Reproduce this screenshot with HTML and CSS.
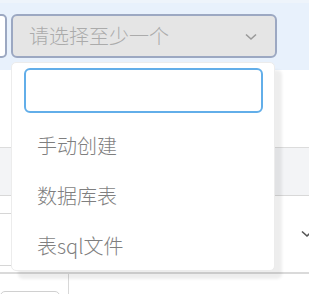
FILE: index.html
```html
<!DOCTYPE html>
<html lang="zh">
<head>
<meta charset="utf-8">
<link rel="stylesheet" href="styles.css">
</head>
<body>
<div class="page">
  <div class="band">
    <div class="filters">
      <div class="input-stub"></div>
      <div class="select">
        <span class="placeholder">请选择至少一个</span>
        <svg class="chev" width="12" height="8" viewBox="0 0 12 8"><path d="M1 1.5 L6 6 L11 1.5" fill="none" stroke="#9a9a9a" stroke-width="1.6"/></svg>
      </div>
    </div>
  </div>
  <div class="gap"></div>
  <div class="thead"></div>
  <div class="trow">
    <div class="cell-stub"></div>
    <svg class="row-chev" width="12" height="8" viewBox="0 0 12 8"><path d="M1 1.5 L6 6 L11 1.5" fill="none" stroke="#555" stroke-width="1.6"/></svg>
  </div>
  <div class="tfoot">
    <div class="foot-box"></div>
    <div class="foot-sep"></div>
  </div>

  <div class="dropdown">
    <div class="search"></div>
    <ul class="options">
      <li>手动创建</li>
      <li>数据库表</li>
      <li>表sql文件</li>
    </ul>
  </div>
</div>
</body>
</html>
```

FILE: styles.css
```css
* { box-sizing: border-box; }
html, body { margin: 0; padding: 0; background: #fff; }
body {
  font-family: "Noto Sans CJK SC", "Noto Sans", sans-serif;
  width: 309px;
  height: 294px;
  overflow: hidden;
}
.page { position: relative; width: 309px; height: 294px; overflow: hidden; }

.band {
  height: 70px;
  background: #e8f1fc;
  border-top: 3px solid #eef4fb;
  padding-top: 11px;
}
.filters { display: flex; gap: 4px; }
.input-stub {
  margin-left: -50px;
  width: 57px;
  height: 44px;
  background: #fff;
  border: 2px solid #9ca8c2;
  border-radius: 5px;
}
.select {
  width: 266px;
  height: 44px;
  background: #e5e5e5;
  border: 2px solid #9ca8c2;
  border-radius: 6px;
  display: flex;
  align-items: center;
  justify-content: space-between;
  padding: 0 18px 0 16px;
}
.placeholder { font-size: 20px; font-weight: 300; color: #ababab; line-height: 1; }
.chev { display: block; margin-top: 1px; }

.gap { height: 78px; border-bottom: 1px solid #dcdcdc; }
.thead { height: 48px; background: #f3f4f6; border-bottom: 1px solid #d8d8d8; }
.trow {
  height: 78px;
  border-bottom: 2px solid #dadada;
  position: relative;
  display: flex;
  align-items: center;
  justify-content: flex-end;
}
.cell-stub {
  position: absolute;
  left: -40px;
  top: 17px;
  width: 80px;
  height: 53px;
  border: 1px solid #d6d6d6;
  border-radius: 4px;
}
.row-chev { margin-right: -4px; }
.tfoot { display: flex; height: 20px; overflow: hidden; }
.foot-box {
  flex: none;
  width: 60px;
  height: 20px;
  margin-top: 17px;
  border: 1px solid #d0d0d0;
  border-radius: 5px;
}
.foot-sep { flex: none; width: 1px; height: 20px; background: #d8d8d8; margin-left: 8px; }

.dropdown {
  position: absolute;
  left: 11px;
  top: 62px;
  width: 264px;
  height: 209px;
  background: #fff;
  border: 1px solid #ececec;
  border-radius: 5px;
  box-shadow: 7px 8px 3px rgba(0, 0, 0, 0.07);
  padding: 5px 11px 0 12px;
}
.search {
  height: 45px;
  border: 2px solid #62aee9;
  border-radius: 6px;
  background: #fff;
}
.options { list-style: none; margin: 0; padding: 0; }
.options li {
  height: 50px;
  line-height: 50px;
  font-size: 20px;
  font-weight: 300;
  color: #7f7f7f;
  padding-left: 13px;
}
.options li:first-child { margin-top: 8px; }
```
